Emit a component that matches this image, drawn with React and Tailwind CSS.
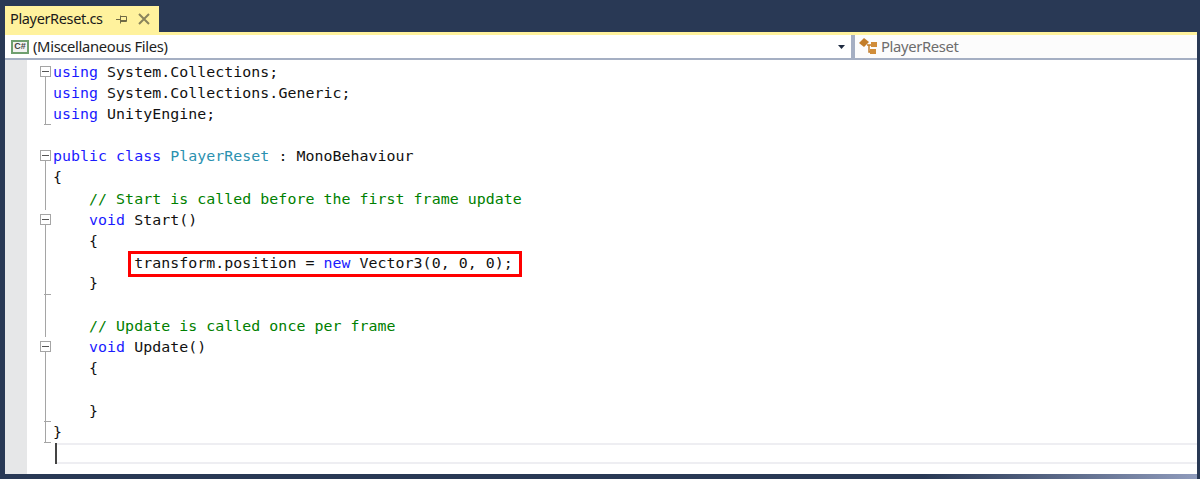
const KW = 'text-[#1a1aff]';
const TYPE = 'text-[#2b91af]';
const COMMENT = 'text-[#008000]';

const lines = [
    { fold: 'open', code: [['using', KW], [' System.Collections;']] },
    { fold: 'line', code: [['using', KW], [' System.Collections.Generic;']] },
    { fold: 'end', code: [['using', KW], [' UnityEngine;']] },
    { fold: 'none', code: [] },
    { fold: 'open', code: [['public class', KW], [' '], ['PlayerReset', TYPE], [' : MonoBehaviour']] },
    { fold: 'line', code: [['{']] },
    { fold: 'line', code: [['    // Start is called before the first frame update', COMMENT]] },
    { fold: 'open', code: [['    '], ['void', KW], [' Start()']] },
    { fold: 'line', code: [['    {']] },
    { fold: 'line', boxed: true, code: [['         transform.position = '], ['new', KW], [' Vector3(0, 0, 0);']] },
    { fold: 'end', code: [['    }']] },
    { fold: 'line', code: [] },
    { fold: 'line', code: [['    // Update is called once per frame', COMMENT]] },
    { fold: 'open', code: [['    '], ['void', KW], [' Update()']] },
    { fold: 'line', code: [['    {']] },
    { fold: 'line', code: [] },
    { fold: 'end', code: [['    }']] },
    { fold: 'end', code: [['}']] },
];

const FoldMark = ({ kind }) => {
    if (kind === 'none') return null;
    if (kind === 'open') {
        return (
            <div className="flex h-full flex-col items-start">
                <div className="mt-[4px] flex h-[11px] w-[11px] shrink-0 items-center justify-center border border-[#a5a5a5] bg-white">
                    <div className="h-px w-[7px] bg-[#555555]"></div>
                </div>
                <div className="ml-[5px] w-px flex-1 bg-[#a5a5a5]"></div>
            </div>
        );
    }
    return (
        <div className="ml-[5px] flex h-full w-[7px] flex-col">
            <div className="w-px flex-1 bg-[#a5a5a5]"></div>
            {kind === 'end' && <div className="-ml-px h-px w-[7px] bg-[#a5a5a5]"></div>}
        </div>
    );
};

const CodeLine = ({ line }) => (
    <div className="flex h-[21.2px]">
        <div className="w-[13px] shrink-0">
            <FoldMark kind={line.fold} />
        </div>
        <div className={line.boxed ? 'relative top-px whitespace-pre leading-[21.2px]' : 'relative whitespace-pre leading-[21.2px]'}>
            {line.code.map(([text, color], i) => (
                <span key={i} className={color}>{text}</span>
            ))}
            {line.boxed && (
                <div className="absolute left-[75px] top-[-2px] h-[26px] w-[394px] border-[3px] border-[#ff0000]"></div>
            )}
        </div>
    </div>
);

const App = () => {
    return (
        <div className="flex h-[479px] w-[1200px] flex-col overflow-hidden bg-[#293955] pl-[5px] pr-[3px] pt-[6px] font-['Noto_Sans','Liberation_Sans',sans-serif]">
            {/* Tab */}
            <div className="flex h-[26px] w-[154px] shrink-0 items-center bg-[#fff29d] pl-[5px] text-[14.5px] tracking-[-0.35px] text-[#1a1a1a]">
                <span>PlayerReset.cs</span>
                <svg className="ml-[13px]" width="12" height="12" viewBox="0 0 12 12" fill="none" stroke="#6f6a45" strokeWidth="1">
                    <path d="M0 6.5h4M4.5 2.5v8M4.5 3.5h6v5h-6M4.5 7.5h6" />
                </svg>
                <svg className="ml-[10px]" width="12" height="12" viewBox="0 0 12 12" fill="none" stroke="#8a845c" strokeWidth="2">
                    <path d="M1 1l10 10M11 1L1 11" />
                </svg>
            </div>

            <div className="flex min-h-0 flex-1 flex-col bg-white">
                {/* Navigation bar */}
                <div className="flex h-[28px] shrink-0 border-t-[3px] border-[#fff29d] bg-[#a5afc3]">
                    <div className="mr-[4px] flex h-[23px] w-[846px] items-center bg-white pl-[6px] pr-[5px] text-[14.8px] tracking-[-0.35px] text-[#1e1e1e]">
                        <div className="flex h-[14px] w-[18px] items-center justify-center border-2 border-[#6f9f6f] bg-[#f2f2f2] font-['Liberation_Sans',sans-serif] text-[9px] font-bold tracking-normal text-[#444444]">
                            C#
                        </div>
                        <span className="ml-[4px]">(Miscellaneous Files)</span>
                        <svg className="ml-auto" width="8" height="4" viewBox="0 0 8 4" fill="#1e2a40">
                            <path d="M0 0h7L3.5 4z" />
                        </svg>
                    </div>
                    <div className="flex h-[23px] flex-1 items-center bg-[#fcfcfc] pl-[4px] text-[14.8px] tracking-[-0.35px] text-[#6d6d6d]">
                        <svg width="18" height="17" viewBox="0 0 18 17" fill="none">
                            <path d="M0 5l5-5 5 4-5 5z" fill="#c27d2a" />
                            <path d="M8 7h6M10 7v7h4" stroke="#c27d2a" strokeWidth="1.5" />
                            <rect x="12" y="4" width="6" height="5" fill="#d08d3a" />
                            <rect x="11" y="11" width="6" height="5" fill="#d08d3a" />
                        </svg>
                        <span className="ml-[4px]">PlayerReset</span>
                    </div>
                </div>

                {/* Editor */}
                <div className="flex min-h-0 flex-1 bg-white">
                    <div className="w-[22px] shrink-0 bg-[#e6e7e8]"></div>
                    <div className="ml-[13px] flex-1 pt-[1.5px] font-['DejaVu_Sans_Mono',monospace] text-[14.9px] tracking-[0.05px] text-[#111111]">
                        {lines.map((line, i) => (
                            <CodeLine key={i} line={line} />
                        ))}
                        {/* Current line */}
                        <div className="ml-[15px] h-[21px] border-y-2 border-[#eeeef2]">
                            <div className="-my-[2px] h-[21px] w-[2px] bg-[#444444]"></div>
                        </div>
                    </div>
                </div>
            </div>

            {/* Bottom edge */}
            <div className="h-[5px] shrink-0 bg-gradient-to-r from-[#293955] from-[77%] to-[#8f9bbc]"></div>
        </div>
    );
};

export default App;
